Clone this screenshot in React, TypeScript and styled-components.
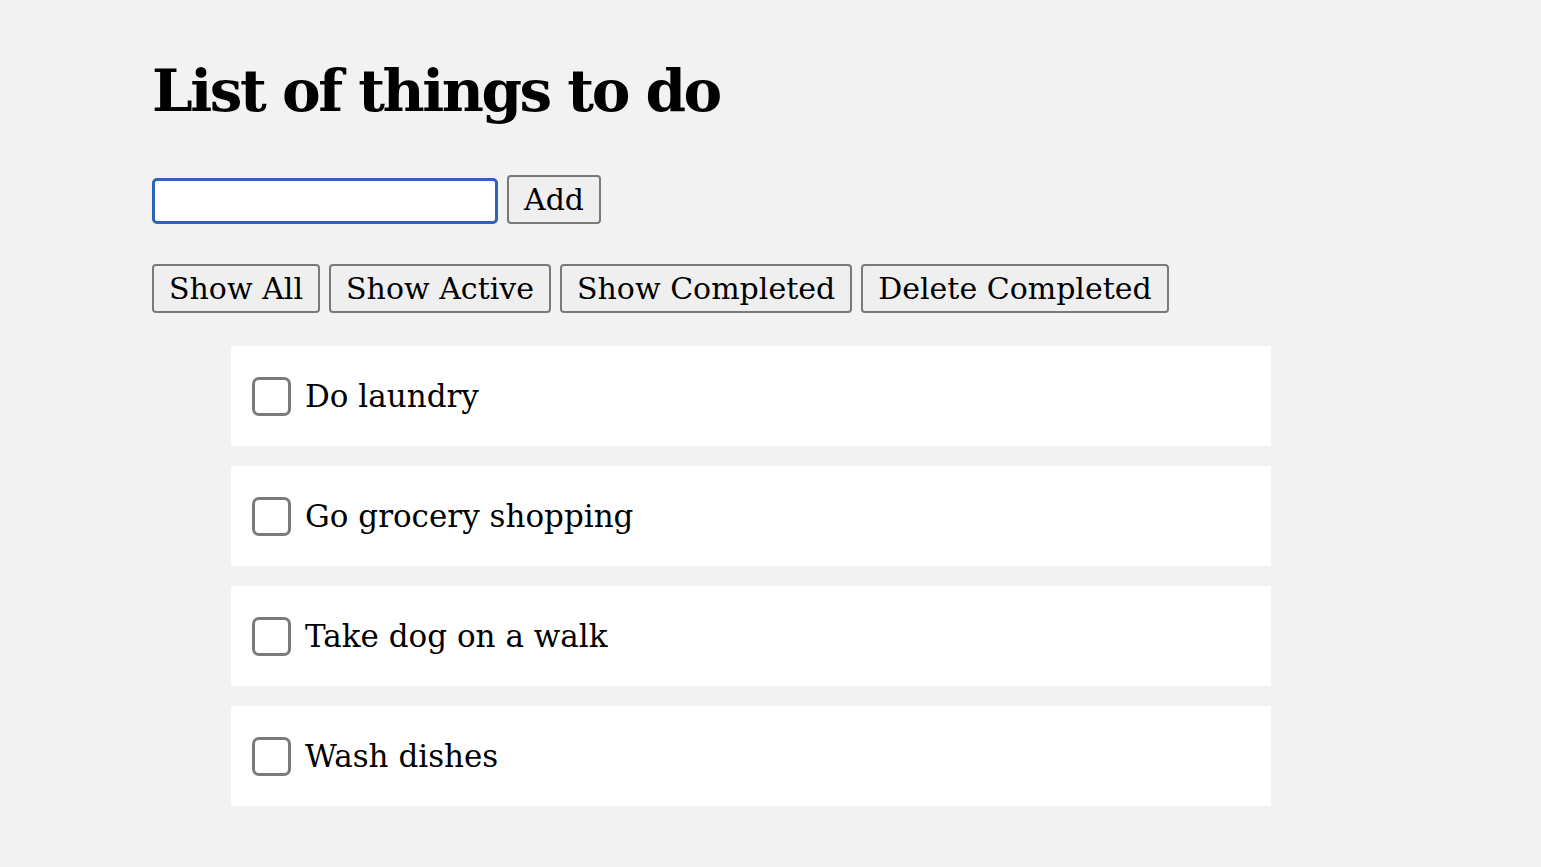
import React, { useState } from "react";
import styled, { createGlobalStyle } from "styled-components";

const GlobalStyle = createGlobalStyle`
  html, body {
    margin: 0;
    padding: 0;
    background-color: #f2f2f2;
  }
  body {
    font-family: "DejaVu Serif", "Liberation Serif", serif;
    color: #000;
  }
`;

const Page = styled.div`
  padding: 41px 0 40px 152px;
  width: 1120px;
`;

const Title = styled.h1`
  margin: 0 0 34px 0;
  font-size: 58px;
  font-weight: 700;
  line-height: 100px;
  letter-spacing: -2.5px;
`;

const AddForm = styled.form`
  display: flex;
  align-items: flex-end;
  gap: 9px;
  margin-bottom: 40px;
`;

const TextInput = styled.input`
  width: 346px;
  height: 46px;
  box-sizing: border-box;
  border: 3px solid #2f62b8;
  border-radius: 5px;
  background: #fff;
  outline: none;
  font-family: inherit;
  font-size: 28px;
  padding: 0 8px;
`;

const Button = styled.button`
  height: 49px;
  box-sizing: border-box;
  padding: 0 15px;
  border: 2px solid #7a7a7a;
  border-radius: 4px;
  background: #efefef;
  font-family: inherit;
  font-size: 30px;
  color: #000;
  cursor: pointer;
`;

const Filters = styled.div`
  display: flex;
  gap: 9px;
  margin-bottom: 33px;
`;

const TodoList = styled.ul`
  list-style: none;
  margin: 0;
  padding: 0 0 0 79px;
  display: flex;
  flex-direction: column;
  gap: 20px;
`;

const TodoItem = styled.li`
  width: 1040px;
  height: 100px;
  box-sizing: border-box;
  background: #fff;
  display: flex;
  align-items: center;
  gap: 14px;
  padding: 0 21px;
  font-size: 31px;
`;

const Check = styled.input`
  appearance: none;
  margin: 0;
  width: 39px;
  height: 39px;
  box-sizing: border-box;
  border: 3px solid #7b7b7b;
  border-radius: 7px;
  background: #fff;
  cursor: pointer;
  &:checked {
    background: #2f62b8;
    border-color: #2f62b8;
  }
`;

const initialTodos = [
  { id: 1, text: "Do laundry", done: false },
  { id: 2, text: "Go grocery shopping", done: false },
  { id: 3, text: "Take dog on a walk", done: false },
  { id: 4, text: "Wash dishes", done: false },
];

const App = () => {
  const [todos, setTodos] = useState(initialTodos);
  const [draft, setDraft] = useState("");
  const [filter, setFilter] = useState("all");

  const addTodo = (e: React.FormEvent) => {
    e.preventDefault();
    if (!draft.trim()) return;
    setTodos([...todos, { id: Date.now(), text: draft, done: false }]);
    setDraft("");
  };

  const toggle = (id: number) =>
    setTodos(todos.map((t) => (t.id === id ? { ...t, done: !t.done } : t)));

  const visible = todos.filter((t) =>
    filter === "active" ? !t.done : filter === "completed" ? t.done : true
  );

  return (
    <>
      <GlobalStyle />
      <Page>
        <Title>List of things to do</Title>
        <AddForm onSubmit={addTodo}>
          <TextInput value={draft} onChange={(e) => setDraft(e.target.value)} />
          <Button type="submit">Add</Button>
        </AddForm>
        <Filters>
          <Button onClick={() => setFilter("all")}>Show All</Button>
          <Button onClick={() => setFilter("active")}>Show Active</Button>
          <Button onClick={() => setFilter("completed")}>Show Completed</Button>
          <Button onClick={() => setTodos(todos.filter((t) => !t.done))}>
            Delete Completed
          </Button>
        </Filters>
        <TodoList>
          {visible.map((todo) => (
            <TodoItem key={todo.id}>
              <Check
                type="checkbox"
                checked={todo.done}
                onChange={() => toggle(todo.id)}
              />
              {todo.text}
            </TodoItem>
          ))}
        </TodoList>
      </Page>
    </>
  );
};

export default App;
